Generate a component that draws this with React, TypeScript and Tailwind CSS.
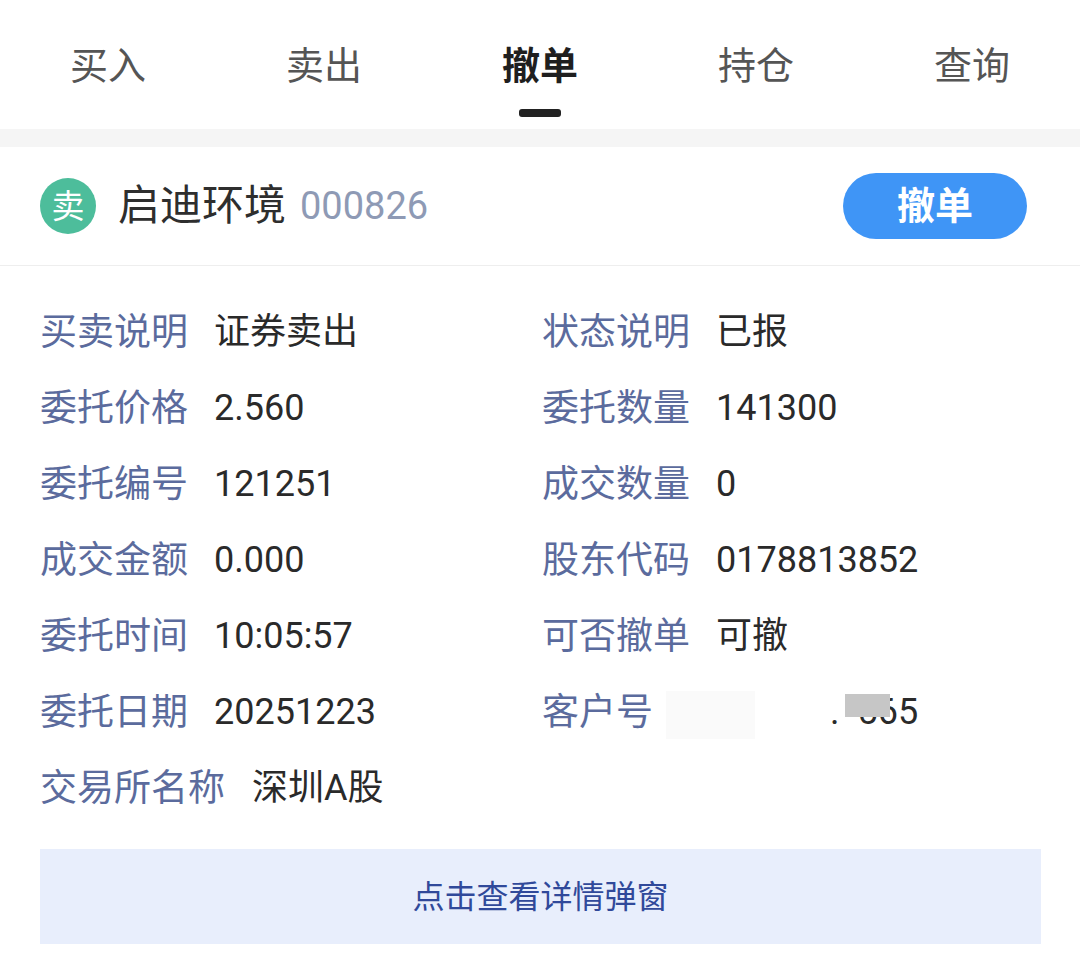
import React from "react";

const tabs = ["买入", "卖出", "撤单", "持仓", "查询"];

const rows: [string, string, string, string][] = [
  ["买卖说明", "证券卖出", "状态说明", "已报"],
  ["委托价格", "2.560", "委托数量", "141300"],
  ["委托编号", "121251", "成交数量", "0"],
  ["成交金额", "0.000", "股东代码", "0178813852"],
  ["委托时间", "10:05:57", "可否撤单", "可撤"],
  ["委托日期", "20251223", "客户号", ""],
];

const font = { fontFamily: "Roboto, 'Noto Sans CJK SC', 'Noto Sans', sans-serif" };

function Cell({ label, value, custom }: { label: string; value: string; custom?: boolean }) {
  return (
    <div className="flex items-center h-[76px] gap-[26px]">
      <span className="text-[37px] leading-none text-[#5b6b9d] w-[148px] shrink-0 whitespace-nowrap">{label}</span>
      {custom ? (
        <span className="relative flex-1 h-[76px] flex items-center">
          <span className="absolute left-[-50px] top-[17px] w-[89px] h-[48px] bg-[#fafafa]" />
          <span className="pl-[114px] text-[36px] leading-none text-[#2a2a2a]">.</span>
          <span className="ml-[18px] text-[36px] leading-none text-[#2a2a2a]">565</span>
          <span className="absolute left-[129px] top-[20px] w-[45px] h-[23px] bg-[#c6c6c6]" />
        </span>
      ) : (
        <span className="text-[36px] leading-none text-[#2a2a2a] whitespace-nowrap">{value}</span>
      )}
    </div>
  );
}

export default function App() {
  return (
    <div className="w-[1080px] h-[953px] bg-white overflow-hidden" style={font}>
      {/* Tabs */}
      <div className="grid grid-cols-5 h-[129px]">
        {tabs.map((t, i) => (
          <div key={t} className="flex flex-col items-center pt-[47px]">
            <span
              className={
                "text-[38px] leading-none " +
                (i === 2 ? "font-bold text-[#1f1f1f]" : "text-[#555555]")
              }
            >
              {t}
            </span>
            {i === 2 && <div className="mt-[24px] w-[42px] h-[8px] rounded-[3px] bg-[#222222]" />}
          </div>
        ))}
      </div>
      <div className="h-[18px] bg-[#f5f5f5]" />

      {/* Header */}
      <div className="flex items-center justify-between h-[119px] px-[40px] border-b border-[#eeeeee]">
        <div className="flex items-center">
          <div className="w-[56px] h-[56px] rounded-full bg-[#4dbd9b] flex items-center justify-center text-white text-[33px] leading-none">
            卖
          </div>
          <span className="ml-[22px] text-[42px] leading-none text-[#2e2e2e]">启迪环境</span>
          <span className="ml-[14px] text-[38px] leading-none text-[#8e9ab5]">000826</span>
        </div>
        <div className="mr-[13px] w-[184px] h-[66px] rounded-full bg-[#3f95f6] flex items-center justify-center text-white text-[38px] font-bold leading-none">
          撤单
        </div>
      </div>

      {/* Details */}
      <div className="px-[40px] pt-[28px]">
        {rows.map((r, i) => (
          <div key={i} className="grid grid-cols-[502px_1fr]">
            <Cell label={r[0]} value={r[1]} />
            <Cell label={r[2]} value={r[3]} custom={i === 5} />
          </div>
        ))}
        <div className="flex items-center h-[76px] gap-[27px]">
          <span className="text-[37px] leading-none text-[#5b6b9d] whitespace-nowrap">交易所名称</span>
          <span className="text-[36px] leading-none text-[#2a2a2a]">深圳A股</span>
        </div>
      </div>

      <div className="mx-[40px] mt-[23px] w-[1001px] h-[95px] bg-[#e8eefc] flex items-center justify-center">
        <span className="text-[32px] leading-none text-[#30499a]">点击查看详情弹窗</span>
      </div>
    </div>
  );
}
